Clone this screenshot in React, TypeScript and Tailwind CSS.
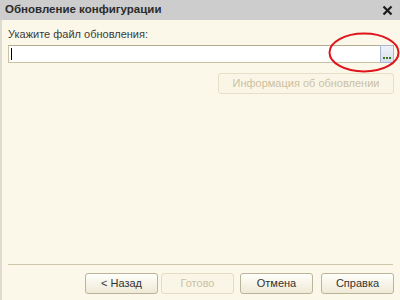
import React from "react";

const btn =
  "h-[21px] w-[73px] rounded-[3px] border border-[#b9b49a] bg-gradient-to-b from-[#fffffb] to-[#efead6] text-[11px] text-[#333] flex items-center justify-center";
const btnDisabled =
  "h-[21px] w-[73px] rounded-[3px] border border-[#e3ddc6] bg-[#f9f6e8] text-[11px] text-[#cdbf9f] flex items-center justify-center";

export default function App() {
  return (
    <div
      className="relative w-[400px] h-[300px] flex flex-col bg-[#fbf8ea] overflow-hidden"
      style={{ fontFamily: '"Liberation Sans", Arial, sans-serif' }}
    >
      {/* Title bar */}
      <div className="h-[20px] bg-[#cdcdcd] flex items-center justify-between pl-[5px] pr-[7px]">
        <span className="text-[11.5px] font-bold text-[#2b2b2b]">Обновление конфигурации</span>
        <svg width="11" height="11" viewBox="0 0 11 11">
          <path d="M1.5 1.5 L9.5 9.5 M9.5 1.5 L1.5 9.5" stroke="#1a1a1a" strokeWidth="2.2" />
        </svg>
      </div>

      <div className="flex-1 flex flex-col border-l-2 border-[#dedbd0] pl-[6px] pr-[6px]">
        <div className="mt-[7px] text-[11px] text-[#3a3a3a] leading-[14px]">Укажите файл обновления:</div>

        <div className="mt-[4px] flex h-[18px]">
          <div className="flex-1 bg-white border-t border-l border-b border-[#c9c2a3] border-t-[#b3ad90] flex items-center pl-[2px]">
            <span className="block w-[1px] h-[12px] bg-black" />
          </div>
          <div className="w-[14px] border border-[#a9b6cf] bg-gradient-to-b from-[#eef1f8] to-[#d9e0ee] flex items-end justify-center pb-[3px]">
            <span className="flex gap-[1px]">
              <span className="block w-[2px] h-[2px] bg-[#3d7a1e]" />
              <span className="block w-[2px] h-[2px] bg-[#3d7a1e]" />
              <span className="block w-[2px] h-[2px] bg-[#3d7a1e]" />
            </span>
          </div>
        </div>

        <div className="mt-[10px] flex justify-end">
          <div className="h-[21px] w-[176px] rounded-[3px] border border-[#e6e0c9] bg-[#f9f6e7] text-[11px] text-[#cdbf9f] flex items-center justify-center">
            Информация об обновлении
          </div>
        </div>

        <div className="flex-1" />

        <div className="h-[1px] bg-[#cdc6a8] mr-[1px]" />

        <div className="flex justify-end items-center mt-[8px] mb-[6px]">
          <div className={btn}>&lt; Назад</div>
          <div className={btnDisabled + " ml-[3px]"}>Готово</div>
          <div className={btn + " ml-[6px]"}>Отмена</div>
          <div className={btn + " ml-[8px]"}>Справка</div>
        </div>
      </div>

      {/* Red highlight ellipse */}
      <svg className="absolute left-[328px] top-[32px]" width="72" height="41" viewBox="0 0 72 41">
        <ellipse cx="36" cy="20.5" rx="34.5" ry="19" fill="none" stroke="#e0141b" strokeWidth="2" />
      </svg>
    </div>
  );
}
